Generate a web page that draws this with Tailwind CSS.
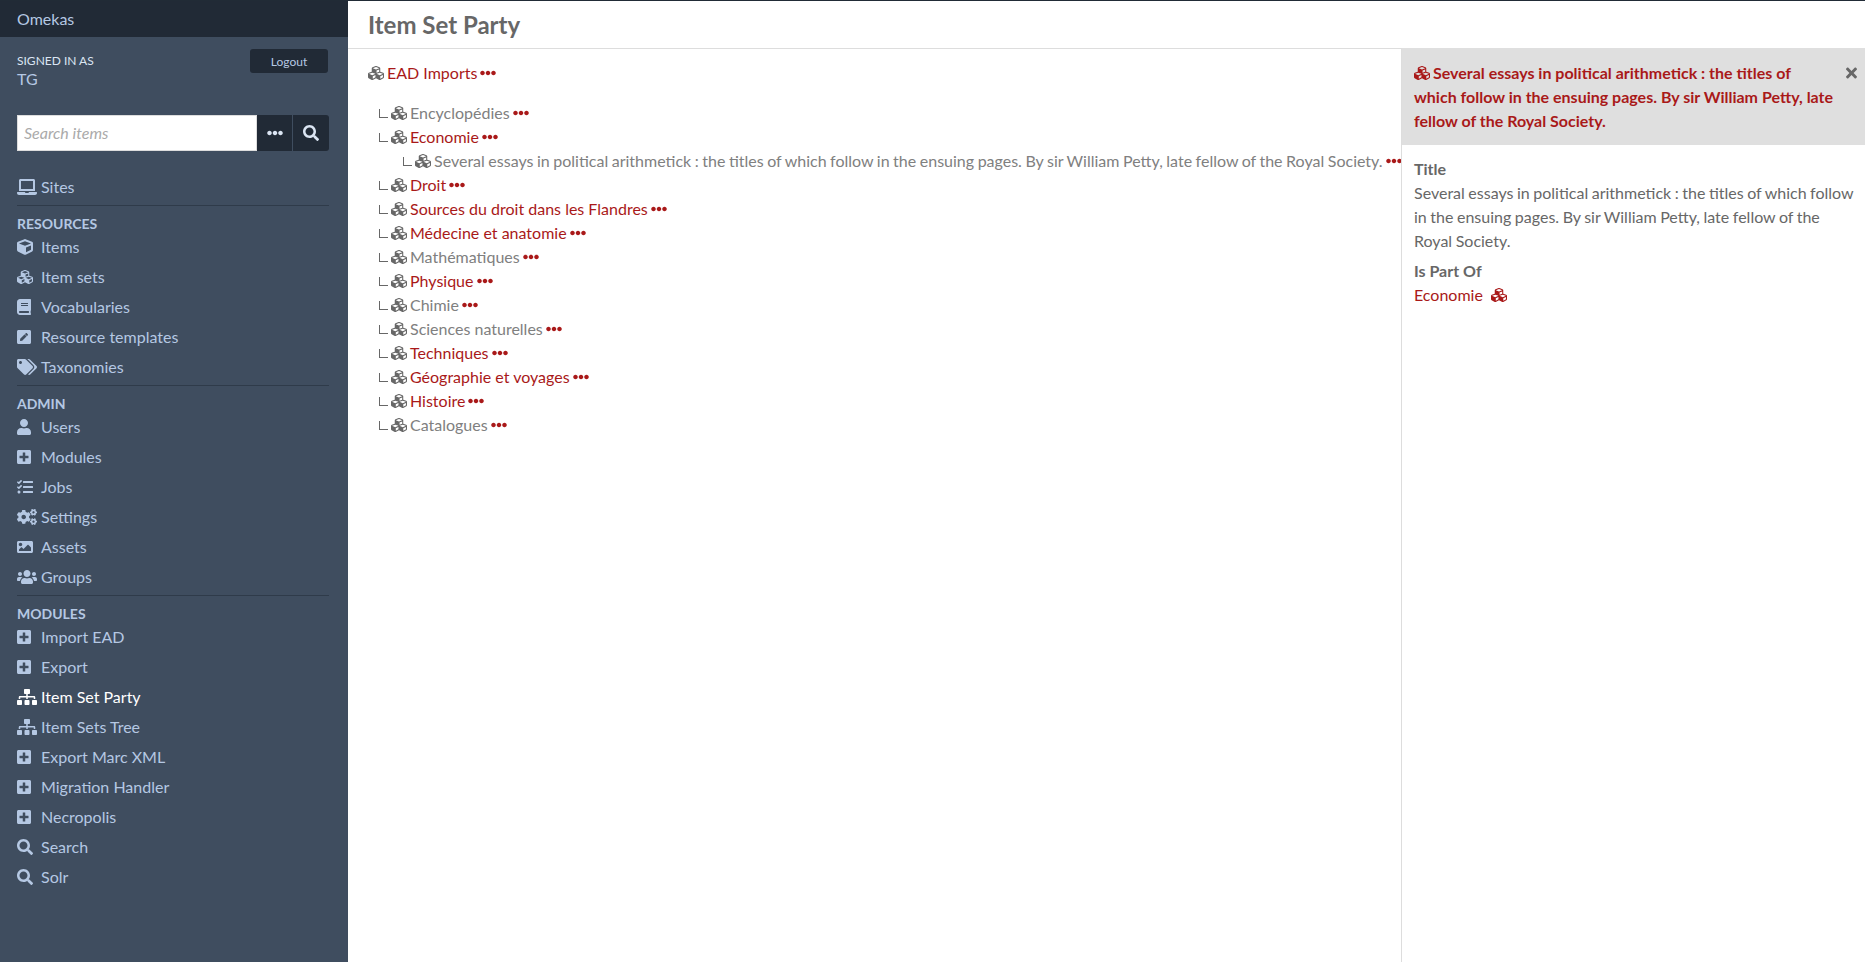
<!DOCTYPE html>
<html lang="en">
<head>
  <meta charset="UTF-8" />
  <title>Item Set Party · Omekas</title>
  <script src="https://cdn.jsdelivr.net/npm/@tailwindcss/browser@4"></script>
</head>
<body class="h-[962px] overflow-hidden bg-white font-['Lato',sans-serif] text-[16px] leading-6 text-[#676767]">
  <svg class="hidden">
    <symbol id="cubes" viewBox="0 0 512 512"><path fill="currentColor" d="M488.6 250.2L392 214V105.5c0-15-9.3-28.4-23.4-33.7l-100-37.5c-8.1-3.1-17.1-3.1-25.3 0l-100 37.5c-14.1 5.3-23.4 18.7-23.4 33.7V214l-96.6 36.2C9.3 255.5 0 268.9 0 283.9V394c0 13.6 7.7 26.1 19.9 32.2l100 50c10.1 5.1 22.1 5.1 32.2 0l103.9-52 103.9 52c10.1 5.1 22.1 5.1 32.2 0l100-50c12.2-6.1 19.9-18.6 19.9-32.2V283.9c0-15-9.3-28.4-23.4-33.7zM358 214.8l-85 31.9v-68.2l85-37v73.3zM154 104.1l102-38.2 102 38.2v.6l-102 41.4-102-41.4v-.6zm84 291.1l-85 42.5v-79.1l85-38.8v75.4zm0-112l-102 41.4-102-41.4v-.6l102-38.2 102 38.2v.6zm240 112l-85 42.5v-79.1l85-38.8v75.4zm0-112l-102 41.4-102-41.4v-.6l102-38.2 102 38.2v.6z"/></symbol>
    <symbol id="cube" viewBox="0 0 512 512"><path fill="currentColor" d="M239.1 6.3l-208 78c-18.7 7-31.1 25-31.1 45v225.1c0 18.2 10.3 34.8 26.5 42.9l208 104c13.5 6.8 29.4 6.8 42.9 0l208-104c16.3-8.1 26.5-24.8 26.5-42.9V129.3c0-20-12.4-37.9-31.1-44.9l-208-78C262 2.2 250 2.2 239.1 6.3zM256 68.4l192 72v1.1l-192 78-192-78v-1.1l192-72zm32 356V275.5l160-65v133.9l-160 80z"/></symbol>
    <symbol id="search" viewBox="0 0 512 512"><path fill="currentColor" d="M505 442.7L405.3 343c-4.5-4.5-10.6-7-17-7H372c27.6-35.3 44-79.7 44-128C416 93.1 322.9 0 208 0S0 93.1 0 208s93.1 208 208 208c48.3 0 92.7-16.4 128-44v16.3c0 6.4 2.5 12.5 7 17l99.7 99.7c9.4 9.4 24.6 9.4 33.9 0l28.3-28.3c9.4-9.4 9.4-24.6.1-34zM208 336c-70.7 0-128-57.2-128-128 0-70.7 57.2-128 128-128 70.7 0 128 57.2 128 128 0 70.7-57.2 128-128 128z"/></symbol>
    <symbol id="laptop" viewBox="0 0 640 512"><path fill="currentColor" d="M624 416H381.54c-.74 19.81-14.71 32-32.74 32H288c-18.69 0-33.02-17.47-32.77-32H16c-8.8 0-16 7.2-16 16v16c0 35.2 28.8 64 64 64h512c35.2 0 64-28.8 64-64v-16c0-8.8-7.2-16-16-16zM576 48c0-26.4-21.6-48-48-48H112C85.6 0 64 21.6 64 48v336h512V48zm-64 272H128V64h384v256z"/></symbol>
    <symbol id="book" viewBox="0 0 448 512"><path fill="currentColor" d="M448 360V24c0-13.3-10.7-24-24-24H96C43 0 0 43 0 96v320c0 53 43 96 96 96h328c13.3 0 24-10.7 24-24v-16c0-7.5-3.5-14.3-8.9-18.7-4.2-15.4-4.2-59.3 0-74.7 5.4-4.3 8.9-11.1 8.9-18.6zM128 134c0-3.3 2.7-6 6-6h212c3.3 0 6 2.7 6 6v20c0 3.3-2.7 6-6 6H134c-3.3 0-6-2.7-6-6v-20zm0 64c0-3.3 2.7-6 6-6h212c3.3 0 6 2.7 6 6v20c0 3.3-2.7 6-6 6H134c-3.3 0-6-2.7-6-6v-20zm253.4 250H96c-17.7 0-32-14.3-32-32 0-17.6 14.4-32 32-32h285.4c-1.9 17.1-1.9 46.9 0 64z"/></symbol>
    <symbol id="pen" viewBox="0 0 448 512"><path fill="currentColor" d="M400 480H48c-26.5 0-48-21.5-48-48V80c0-26.5 21.5-48 48-48h352c26.5 0 48 21.5 48 48v352c0 26.5-21.5 48-48 48zM238.1 177.9L102.4 313.6l-6.3 57.1c-.8 7.6 5.6 14.1 13.3 13.3l57.1-6.3L302.2 242c2.3-2.3 2.3-6.1 0-8.5L246.7 178c-2.5-2.4-6.3-2.4-8.6-.1zM345 165.1L314.9 135c-9.4-9.4-24.6-9.4-33.9 0l-23.1 23.1c-2.3 2.3-2.3 6.1 0 8.5l55.5 55.5c2.3 2.3 6.1 2.3 8.5 0L345 199c9.3-9.3 9.3-24.5 0-33.9z"/></symbol>
    <symbol id="tags" viewBox="0 0 640 512"><path fill="currentColor" d="M497.941 225.941L286.059 14.059A48 48 0 0 0 252.118 0H48C21.49 0 0 21.49 0 48v204.118a48 48 0 0 0 14.059 33.941l211.882 211.882c18.744 18.745 49.136 18.746 67.882 0l204.118-204.118c18.745-18.745 18.745-49.137 0-67.882zM112 160c-26.51 0-48-21.49-48-48s21.49-48 48-48 48 21.49 48 48-21.49 48-48 48zm513.941 133.823L421.823 497.941c-18.745 18.745-49.137 18.745-67.882 0l-.36-.36L527.64 323.522c16.999-16.999 26.36-39.6 26.36-63.64s-9.362-46.641-26.36-63.64L331.397 0h48.721a48 48 0 0 1 33.941 14.059l211.882 211.882c18.745 18.745 18.745 49.137 0 67.882z"/></symbol>
    <symbol id="user" viewBox="0 0 448 512"><path fill="currentColor" d="M224 256c70.7 0 128-57.3 128-128S294.7 0 224 0 96 57.3 96 128s57.3 128 128 128zm89.6 32h-16.7c-22.2 10.2-46.9 16-72.9 16s-50.6-5.8-72.9-16h-16.7C60.2 288 0 348.2 0 422.4V464c0 26.5 21.5 48 48 48h352c26.5 0 48-21.5 48-48v-41.6c0-74.2-60.2-134.4-134.4-134.4z"/></symbol>
    <symbol id="plus" viewBox="0 0 448 512"><path fill="currentColor" d="M400 32H48C21.5 32 0 53.5 0 80v352c0 26.5 21.5 48 48 48h352c26.5 0 48-21.5 48-48V80c0-26.5-21.5-48-48-48zm-32 252c0 6.6-5.4 12-12 12h-92v92c0 6.6-5.4 12-12 12h-56c-6.6 0-12-5.4-12-12v-92H92c-6.6 0-12-5.4-12-12v-56c0-6.6 5.4-12 12-12h92v-92c0-6.6 5.4-12 12-12h56c6.6 0 12 5.4 12 12v92h92c6.6 0 12 5.4 12 12v56z"/></symbol>
    <symbol id="tasks" viewBox="0 0 512 512"><path fill="currentColor" d="M139.61 35.5a12 12 0 0 0-17 0L58.93 98.81l-22.7-22.12a12 12 0 0 0-17 0L3.53 92.41a12 12 0 0 0 0 17l47.59 47.4a12.78 12.78 0 0 0 17.61 0l15.59-15.62L156.52 69a12.09 12.09 0 0 0 .09-17zm0 159.19a12 12 0 0 0-17 0l-63.68 63.72-22.7-22.1a12 12 0 0 0-17 0L3.53 252a12 12 0 0 0 0 17L51 316.5a12.77 12.77 0 0 0 17.6 0l15.7-15.69 72.2-72.22a12 12 0 0 0 .09-16.9zM64 368c-26.49 0-48.59 21.5-48.59 48S37.53 464 64 464a48 48 0 0 0 0-96zm432 16H208a16 16 0 0 0-16 16v32a16 16 0 0 0 16 16h288a16 16 0 0 0 16-16v-32a16 16 0 0 0-16-16zm0-320H208a16 16 0 0 0-16 16v32a16 16 0 0 0 16 16h288a16 16 0 0 0 16-16V80a16 16 0 0 0-16-16zm0 160H208a16 16 0 0 0-16 16v32a16 16 0 0 0 16 16h288a16 16 0 0 0 16-16v-32a16 16 0 0 0-16-16z"/></symbol>
    <symbol id="cogs" viewBox="0 0 640 512"><path fill="currentColor" d="M512.1 191l-8.2 14.3c-3 5.3-9.4 7.5-15.1 5.4-11.8-4.4-22.6-10.7-32.1-18.6-4.6-3.8-5.8-10.5-2.8-15.7l8.2-14.3c-6.9-8-12.3-17.3-15.9-27.4h-16.5c-6 0-11.2-4.3-12.2-10.3-2-12-2.1-24.6 0-37.1 1-6 6.2-10.4 12.2-10.4h16.5c3.6-10.1 9-19.4 15.9-27.4l-8.2-14.3c-3-5.2-1.9-11.9 2.8-15.7 9.5-7.9 20.4-14.2 32.1-18.6 5.7-2.1 12.1.1 15.1 5.4l8.2 14.3c10.5-1.9 21.2-1.9 31.7 0L552 6.3c3-5.3 9.4-7.5 15.1-5.4 11.8 4.4 22.6 10.7 32.1 18.6 4.6 3.8 5.8 10.5 2.8 15.7l-8.2 14.3c6.9 8 12.3 17.3 15.9 27.4h16.5c6 0 11.2 4.3 12.2 10.3 2 12 2.1 24.6 0 37.1-1 6-6.2 10.4-12.2 10.4h-16.5c-3.6 10.1-9 19.4-15.9 27.4l8.2 14.3c3 5.2 1.9 11.9-2.8 15.7-9.5 7.9-20.4 14.2-32.1 18.6-5.7 2.1-12.1-.1-15.1-5.4l-8.2-14.3c-10.4 1.9-21.2 1.9-31.7 0zm-10.5-58.8c38.5 29.6 82.4-14.3 52.8-52.8-38.5-29.7-82.4 14.3-52.8 52.8zM386.3 286.1l33.7 16.8c10.1 5.8 14.5 18.1 10.5 29.1-8.9 24.2-26.4 46.4-42.6 65.8-7.4 8.9-20.2 11.1-30.3 5.3l-29.1-16.8c-16 13.7-34.6 24.6-54.9 31.7v33.6c0 11.6-8.3 21.6-19.7 23.6-24.6 4.2-50.4 4.4-75.9 0-11.5-2-20-11.9-20-23.6V418c-20.3-7.2-38.9-18-54.9-31.7L74 403c-10 5.8-22.9 3.6-30.3-5.3-16.2-19.4-33.3-41.6-42.2-65.7-4-10.9.4-23.2 10.5-29.1l33.3-16.8c-3.9-20.9-3.9-42.4 0-63.4L12 205.8c-10.1-5.8-14.6-18.1-10.5-29 8.9-24.2 26-46.4 42.2-65.8 7.4-8.9 20.2-11.1 30.3-5.3l29.1 16.8c16-13.7 34.6-24.6 54.9-31.7V57.1c0-11.5 8.2-21.5 19.6-23.5 24.6-4.2 50.5-4.4 76-.1 11.5 2 20 11.9 20 23.6v33.6c20.3 7.2 38.9 18 54.9 31.7l29.1-16.8c10-5.8 22.9-3.6 30.3 5.3 16.2 19.4 33.2 41.6 42.1 65.8 4 10.9.1 23.2-10 29.1l-33.7 16.8c3.9 21 3.9 42.5 0 63.5zm-117.6 21.1c59.2-77-28.7-164.9-105.7-105.7-59.2 77 28.7 164.9 105.7 105.7zm243.4 182.7l-8.2 14.3c-3 5.3-9.4 7.5-15.1 5.4-11.8-4.4-22.6-10.7-32.1-18.6-4.6-3.8-5.8-10.5-2.8-15.7l8.2-14.3c-6.9-8-12.3-17.3-15.9-27.4h-16.5c-6 0-11.2-4.3-12.2-10.3-2-12-2.1-24.6 0-37.1 1-6 6.2-10.4 12.2-10.4h16.5c3.6-10.1 9-19.4 15.9-27.4l-8.2-14.3c-3-5.2-1.9-11.9 2.8-15.7 9.5-7.9 20.4-14.2 32.1-18.6 5.7-2.1 12.1.1 15.1 5.4l8.2 14.3c10.5-1.9 21.2-1.9 31.7 0l8.2-14.3c3-5.3 9.4-7.5 15.1-5.4 11.8 4.4 22.6 10.7 32.1 18.6 4.6 3.8 5.8 10.5 2.8 15.7l-8.2 14.3c6.9 8 12.3 17.3 15.9 27.4h16.5c6 0 11.2 4.3 12.2 10.3 2 12 2.1 24.6 0 37.1-1 6-6.2 10.4-12.2 10.4h-16.5c-3.6 10.1-9 19.4-15.9 27.4l8.2 14.3c3 5.2 1.9 11.9-2.8 15.7-9.5 7.9-20.4 14.2-32.1 18.6-5.7 2.1-12.1-.1-15.1-5.4l-8.2-14.3c-10.4 1.9-21.2 1.9-31.7 0zM501.6 431c38.5 29.6 82.4-14.3 52.8-52.8-38.5-29.6-82.4 14.3-52.8 52.8z"/></symbol>
    <symbol id="image" viewBox="0 0 512 512"><path fill="currentColor" d="M464 448H48c-26.51 0-48-21.49-48-48V112c0-26.51 21.49-48 48-48h416c26.51 0 48 21.49 48 48v288c0 26.51-21.49 48-48 48zM112 120c-30.928 0-56 25.072-56 56s25.072 56 56 56 56-25.072 56-56-25.072-56-56-56zM64 384h384V272l-87.515-87.515c-4.686-4.686-12.284-4.686-16.971 0L208 320l-55.515-55.515c-4.686-4.686-12.284-4.686-16.971 0L64 336v48z"/></symbol>
    <symbol id="users" viewBox="0 0 640 512"><path fill="currentColor" d="M96 224c35.3 0 64-28.7 64-64s-28.7-64-64-64-64 28.7-64 64 28.7 64 64 64zm448 0c35.3 0 64-28.7 64-64s-28.7-64-64-64-64 28.7-64 64 28.7 64 64 64zm32 32h-64c-17.6 0-33.5 7.1-45.1 18.6 40.3 22.1 68.9 62 75.1 109.4h66c17.7 0 32-14.3 32-32v-32c0-35.3-28.7-64-64-64zm-256 0c61.9 0 112-50.1 112-112S381.9 32 320 32 208 82.1 208 144s50.1 112 112 112zm76.8 32h-8.3c-20.8 10-43.9 16-68.5 16s-47.6-6-68.5-16h-8.3C179.6 288 128 339.6 128 403.2V432c0 26.5 21.5 48 48 48h288c26.5 0 48-21.5 48-48v-28.8c0-63.6-51.6-115.2-115.2-115.2zm-223.7-13.4C161.5 263.1 145.6 256 128 256H64c-35.3 0-64 28.7-64 64v32c0 17.7 14.3 32 32 32h65.9c6.3-47.4 34.9-87.3 75.2-109.4z"/></symbol>
    <symbol id="sitemap" viewBox="0 0 640 512"><path fill="currentColor" d="M128 352H32c-17.67 0-32 14.33-32 32v96c0 17.67 14.33 32 32 32h96c17.67 0 32-14.33 32-32v-96c0-17.67-14.33-32-32-32zm-24-80h192v48h48v-48h192v48h48v-57.59c0-21.17-17.23-38.41-38.41-38.41H344v-64h40c17.67 0 32-14.33 32-32V32c0-17.67-14.33-32-32-32H256c-17.67 0-32 14.33-32 32v96c0 17.67 14.33 32 32 32h40v64H94.41C73.23 224 56 241.23 56 262.41V320h48v-48zm264 80h-96c-17.67 0-32 14.33-32 32v96c0 17.67 14.33 32 32 32h96c17.67 0 32-14.33 32-32v-96c0-17.67-14.33-32-32-32zm240 0h-96c-17.67 0-32 14.33-32 32v96c0 17.67 14.33 32 32 32h96c17.67 0 32-14.33 32-32v-96c0-17.67-14.33-32-32-32z"/></symbol>
    <symbol id="times" viewBox="0 0 352 512"><path fill="currentColor" d="M242.72 256l100.07-100.07c12.28-12.28 12.28-32.19 0-44.48l-22.24-22.24c-12.28-12.28-32.19-12.28-44.48 0L176 189.28 75.93 89.21c-12.28-12.28-32.19-12.28-44.48 0L9.21 111.45c-12.28 12.28-12.28 32.19 0 44.48L109.28 256 9.21 356.07c-12.28 12.28-12.28 32.19 0 44.48l22.24 22.24c12.28 12.28 32.2 12.28 44.48 0L176 322.72l100.07 100.07c12.28 12.28 32.2 12.28 44.48 0l22.24-22.24c12.28-12.28 12.28-32.19 0-44.48L242.72 256z"/></symbol>
    <symbol id="dots" viewBox="0 0 512 512"><path fill="currentColor" d="M328 256c0 39.8-32.2 72-72 72s-72-32.2-72-72 32.2-72 72-72 72 32.2 72 72zm104-72c-39.8 0-72 32.2-72 72s32.2 72 72 72 72-32.2 72-72-32.2-72-72-72zm-352 0c-39.8 0-72 32.2-72 72s32.2 72 72 72 72-32.2 72-72-32.2-72-72-72z"/></symbol>
  </svg>

  <div class="flex h-full border-t border-[#212b36]">
    <!-- Sidebar -->
    <aside class="w-[348px] shrink-0 bg-[#3f4d5f] text-[#b5c8e3]">
      <div class="h-[36px] bg-[#212a36] pl-[17px] leading-[36px]">Omekas</div>

      <div class="flex justify-between pl-[17px] pr-[20px] pt-[12px]">
        <div>
          <div class="text-[12px] leading-[24px] text-[#dbe5f3] uppercase">Signed in as</div>
          <div class="-mt-[6px] leading-[24px]">TG</div>
        </div>
        <button class="h-[24px] w-[78px] rounded-[3px] bg-[#212a36] text-[12px] leading-[25px]">Logout</button>
      </div>

      <form class="ml-[17px] mt-[24px] flex h-[36px] w-[312px]">
        <input type="text" placeholder="Search items" class="h-full w-[240px] border border-[#ddd] bg-white px-[6px] pb-[1px] italic placeholder:text-[#aaa]">
        <button type="button" class="flex w-[36px] items-center justify-center border-r border-[#3f4d5f] bg-[#212a36] text-[#dbe5f3]"><svg class="h-4 w-4"><use href="#dots"/></svg></button>
        <button type="button" class="flex w-[36px] items-center justify-center rounded-r-[3px] bg-[#212a36] text-[#dbe5f3]"><svg class="h-4 w-4"><use href="#search"/></svg></button>
      </form>

      <nav class="mx-[17px] mt-[21px] w-[312px]">
        <a class="flex h-[30px] items-center"><svg class="mr-[4px] h-4 w-5 shrink-0"><use href="#laptop"/></svg>Sites</a>
        <div class="mt-[3px] border-t border-[#2f3b4a] pt-[10px]">
          <h4 class="text-[14px] font-bold leading-[16px] uppercase">Resources</h4>
          <a class="flex h-[30px] items-center"><svg class="mr-[8px] h-4 w-4 shrink-0"><use href="#cube"/></svg>Items</a>
          <a class="flex h-[30px] items-center"><svg class="mr-[8px] h-4 w-4 shrink-0"><use href="#cubes"/></svg>Item sets</a>
          <a class="flex h-[30px] items-center"><svg class="mr-[10px] h-4 w-[14px] shrink-0"><use href="#book"/></svg>Vocabularies</a>
          <a class="flex h-[30px] items-center"><svg class="mr-[10px] h-4 w-[14px] shrink-0"><use href="#pen"/></svg>Resource templates</a>
          <a class="flex h-[30px] items-center"><svg class="mr-[4px] h-4 w-5 shrink-0"><use href="#tags"/></svg>Taxonomies</a>
        </div>
        <div class="mt-[3px] border-t border-[#2f3b4a] pt-[10px]">
          <h4 class="text-[14px] font-bold leading-[16px] uppercase">Admin</h4>
          <a class="flex h-[30px] items-center"><svg class="mr-[10px] h-4 w-[14px] shrink-0"><use href="#user"/></svg>Users</a>
          <a class="flex h-[30px] items-center"><svg class="mr-[10px] h-4 w-[14px] shrink-0"><use href="#plus"/></svg>Modules</a>
          <a class="flex h-[30px] items-center"><svg class="mr-[8px] h-4 w-4 shrink-0"><use href="#tasks"/></svg>Jobs</a>
          <a class="flex h-[30px] items-center"><svg class="mr-[4px] h-4 w-5 shrink-0"><use href="#cogs"/></svg>Settings</a>
          <a class="flex h-[30px] items-center"><svg class="mr-[8px] h-4 w-4 shrink-0"><use href="#image"/></svg>Assets</a>
          <a class="flex h-[30px] items-center"><svg class="mr-[4px] h-4 w-5 shrink-0"><use href="#users"/></svg>Groups</a>
        </div>
        <div class="mt-[3px] border-t border-[#2f3b4a] pt-[10px]">
          <h4 class="text-[14px] font-bold leading-[16px] uppercase">Modules</h4>
          <a class="flex h-[30px] items-center"><svg class="mr-[10px] h-4 w-[14px] shrink-0"><use href="#plus"/></svg>Import EAD</a>
          <a class="flex h-[30px] items-center"><svg class="mr-[10px] h-4 w-[14px] shrink-0"><use href="#plus"/></svg>Export</a>
          <a class="flex h-[30px] items-center text-white"><svg class="mr-[4px] h-4 w-5 shrink-0"><use href="#sitemap"/></svg>Item Set Party</a>
          <a class="flex h-[30px] items-center"><svg class="mr-[4px] h-4 w-5 shrink-0"><use href="#sitemap"/></svg>Item Sets Tree</a>
          <a class="flex h-[30px] items-center"><svg class="mr-[10px] h-4 w-[14px] shrink-0"><use href="#plus"/></svg>Export Marc XML</a>
          <a class="flex h-[30px] items-center"><svg class="mr-[10px] h-4 w-[14px] shrink-0"><use href="#plus"/></svg>Migration Handler</a>
          <a class="flex h-[30px] items-center"><svg class="mr-[10px] h-4 w-[14px] shrink-0"><use href="#plus"/></svg>Necropolis</a>
          <a class="flex h-[30px] items-center"><svg class="mr-[8px] h-4 w-4 shrink-0"><use href="#search"/></svg>Search</a>
          <a class="flex h-[30px] items-center"><svg class="mr-[8px] h-4 w-4 shrink-0"><use href="#search"/></svg>Solr</a>
        </div>
      </nav>
    </aside>

    <!-- Main -->
    <div class="flex min-w-0 flex-1 flex-col">
      <header class="h-[48px] shrink-0 border-b border-[#ddd] pl-[20px] text-[24px] font-bold leading-[47px]">Item Set Party</header>
      <div class="flex min-h-0 flex-1">
        <main class="min-w-0 flex-1 whitespace-nowrap pl-[20px] pt-[12px]">
          <div class="flex h-[24px] items-center text-[#a91919]">
            <svg class="mr-[3px] h-4 w-4 shrink-0 text-[#676767]"><use href="#cubes"/></svg>EAD Imports<svg class="ml-[3px] h-4 w-4 shrink-0"><use href="#dots"/></svg>
          </div>
          <ul class="mt-[16px] pl-[11px]">
            <li class="flex h-[24px] items-center text-[#808080]"><span class="mr-[3px] h-[9px] w-[9px] shrink-0 border-b-[1.5px] border-l-[1.5px] border-[#676767]"></span><svg class="mr-[3px] h-4 w-4 shrink-0 text-[#676767]"><use href="#cubes"/></svg>Encyclopédies<svg class="ml-[3px] h-4 w-4 shrink-0 text-[#a91919]"><use href="#dots"/></svg></li>
            <li class="flex h-[24px] items-center text-[#a91919]"><span class="mr-[3px] h-[9px] w-[9px] shrink-0 border-b-[1.5px] border-l-[1.5px] border-[#676767]"></span><svg class="mr-[3px] h-4 w-4 shrink-0 text-[#676767]"><use href="#cubes"/></svg>Economie<svg class="ml-[3px] h-4 w-4 shrink-0"><use href="#dots"/></svg></li>
            <li class="flex h-[24px] items-center pl-[24px] text-[#808080] [word-spacing:-0.55px]"><span class="mr-[3px] h-[9px] w-[9px] shrink-0 border-b-[1.5px] border-l-[1.5px] border-[#676767]"></span><svg class="mr-[3px] h-4 w-4 shrink-0 text-[#676767]"><use href="#cubes"/></svg>Several essays in political arithmetick : the titles of which follow in the ensuing pages. By sir William Petty, late fellow of the Royal Society.<svg class="ml-[3px] h-4 w-4 shrink-0 text-[#a91919]"><use href="#dots"/></svg></li>
            <li class="flex h-[24px] items-center text-[#a91919]"><span class="mr-[3px] h-[9px] w-[9px] shrink-0 border-b-[1.5px] border-l-[1.5px] border-[#676767]"></span><svg class="mr-[3px] h-4 w-4 shrink-0 text-[#676767]"><use href="#cubes"/></svg>Droit<svg class="ml-[3px] h-4 w-4 shrink-0"><use href="#dots"/></svg></li>
            <li class="flex h-[24px] items-center text-[#a91919]"><span class="mr-[3px] h-[9px] w-[9px] shrink-0 border-b-[1.5px] border-l-[1.5px] border-[#676767]"></span><svg class="mr-[3px] h-4 w-4 shrink-0 text-[#676767]"><use href="#cubes"/></svg>Sources du droit dans les Flandres<svg class="ml-[3px] h-4 w-4 shrink-0"><use href="#dots"/></svg></li>
            <li class="flex h-[24px] items-center text-[#a91919]"><span class="mr-[3px] h-[9px] w-[9px] shrink-0 border-b-[1.5px] border-l-[1.5px] border-[#676767]"></span><svg class="mr-[3px] h-4 w-4 shrink-0 text-[#676767]"><use href="#cubes"/></svg>Médecine et anatomie<svg class="ml-[3px] h-4 w-4 shrink-0"><use href="#dots"/></svg></li>
            <li class="flex h-[24px] items-center text-[#808080]"><span class="mr-[3px] h-[9px] w-[9px] shrink-0 border-b-[1.5px] border-l-[1.5px] border-[#676767]"></span><svg class="mr-[3px] h-4 w-4 shrink-0 text-[#676767]"><use href="#cubes"/></svg>Mathématiques<svg class="ml-[3px] h-4 w-4 shrink-0 text-[#a91919]"><use href="#dots"/></svg></li>
            <li class="flex h-[24px] items-center text-[#a91919]"><span class="mr-[3px] h-[9px] w-[9px] shrink-0 border-b-[1.5px] border-l-[1.5px] border-[#676767]"></span><svg class="mr-[3px] h-4 w-4 shrink-0 text-[#676767]"><use href="#cubes"/></svg>Physique<svg class="ml-[3px] h-4 w-4 shrink-0"><use href="#dots"/></svg></li>
            <li class="flex h-[24px] items-center text-[#808080]"><span class="mr-[3px] h-[9px] w-[9px] shrink-0 border-b-[1.5px] border-l-[1.5px] border-[#676767]"></span><svg class="mr-[3px] h-4 w-4 shrink-0 text-[#676767]"><use href="#cubes"/></svg>Chimie<svg class="ml-[3px] h-4 w-4 shrink-0 text-[#a91919]"><use href="#dots"/></svg></li>
            <li class="flex h-[24px] items-center text-[#808080]"><span class="mr-[3px] h-[9px] w-[9px] shrink-0 border-b-[1.5px] border-l-[1.5px] border-[#676767]"></span><svg class="mr-[3px] h-4 w-4 shrink-0 text-[#676767]"><use href="#cubes"/></svg>Sciences naturelles<svg class="ml-[3px] h-4 w-4 shrink-0 text-[#a91919]"><use href="#dots"/></svg></li>
            <li class="flex h-[24px] items-center text-[#a91919]"><span class="mr-[3px] h-[9px] w-[9px] shrink-0 border-b-[1.5px] border-l-[1.5px] border-[#676767]"></span><svg class="mr-[3px] h-4 w-4 shrink-0 text-[#676767]"><use href="#cubes"/></svg>Techniques<svg class="ml-[3px] h-4 w-4 shrink-0"><use href="#dots"/></svg></li>
            <li class="flex h-[24px] items-center text-[#a91919]"><span class="mr-[3px] h-[9px] w-[9px] shrink-0 border-b-[1.5px] border-l-[1.5px] border-[#676767]"></span><svg class="mr-[3px] h-4 w-4 shrink-0 text-[#676767]"><use href="#cubes"/></svg>Géographie et voyages<svg class="ml-[3px] h-4 w-4 shrink-0"><use href="#dots"/></svg></li>
            <li class="flex h-[24px] items-center text-[#a91919]"><span class="mr-[3px] h-[9px] w-[9px] shrink-0 border-b-[1.5px] border-l-[1.5px] border-[#676767]"></span><svg class="mr-[3px] h-4 w-4 shrink-0 text-[#676767]"><use href="#cubes"/></svg>Histoire<svg class="ml-[3px] h-4 w-4 shrink-0"><use href="#dots"/></svg></li>
            <li class="flex h-[24px] items-center text-[#808080]"><span class="mr-[3px] h-[9px] w-[9px] shrink-0 border-b-[1.5px] border-l-[1.5px] border-[#676767]"></span><svg class="mr-[3px] h-4 w-4 shrink-0 text-[#676767]"><use href="#cubes"/></svg>Catalogues<svg class="ml-[3px] h-4 w-4 shrink-0 text-[#a91919]"><use href="#dots"/></svg></li>
          </ul>
        </main>

        <!-- Details panel -->
        <section class="w-[464px] shrink-0 border-l border-[#ddd]">
          <div class="relative -mt-px bg-[#dfdfdf] pb-[12px] pl-[12px] pr-[30px] pt-[13px] font-bold text-[#a91919]">
            <svg class="mb-[3px] mr-[3px] inline-block h-4 w-4"><use href="#cubes"/></svg>Several essays in political arithmetick : the titles of which follow in the ensuing pages. By sir William Petty, late fellow of the Royal Society.
            <svg class="absolute right-[8px] top-[17px] h-4 w-[11px] text-[#676767]"><use href="#times"/></svg>
          </div>
          <div class="pl-[12px] pr-[6px] pt-[12px]">
            <h4 class="font-bold">Title</h4>
            <p class="[word-spacing:-0.55px]">Several essays in political arithmetick : the titles of which follow in the ensuing pages. By sir William Petty, late fellow of the Royal Society.</p>
            <h4 class="mt-[6px] font-bold">Is Part Of</h4>
            <p class="flex items-center text-[#a91919]">Economie<svg class="ml-[8px] h-4 w-4"><use href="#cubes"/></svg></p>
          </div>
        </section>
      </div>
    </div>
  </div>
</body>
</html>
